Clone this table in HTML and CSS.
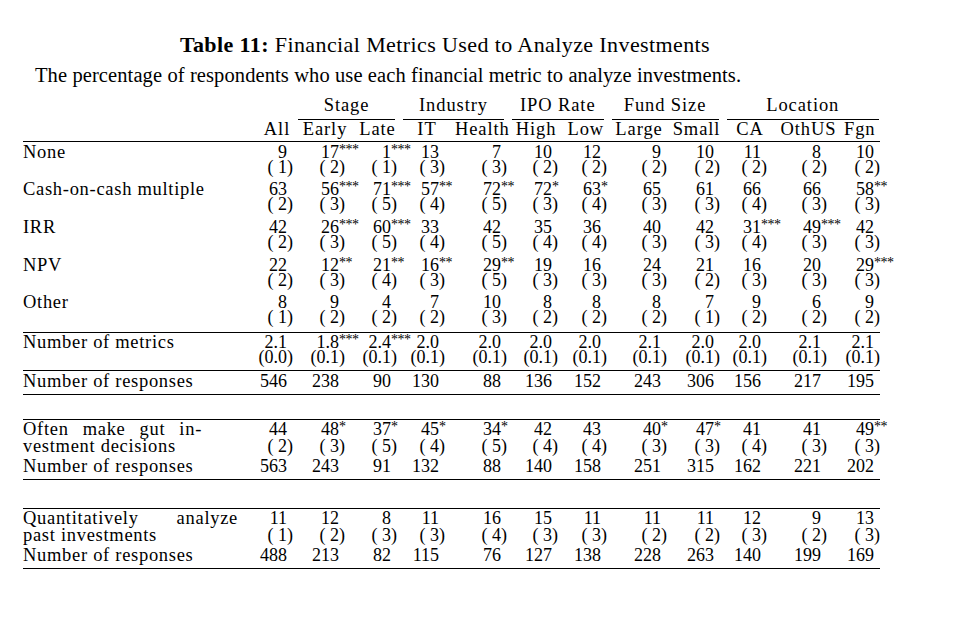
FILE: index.html
```html
<!DOCTYPE html>
<html lang="en">
<head>
<meta charset="utf-8">
<title>Table 11</title>
<link rel="stylesheet" href="styles.css">
</head>
<body>
<div class="page">
  <h1 class="title"><b>Table 11:</b> Financial Metrics Used to Analyze Investments</h1>
  <p class="caption">The percentage of respondents who use each financial metric to analyze investments.</p>
  <div class="tbl">
    <div class="hrow groups">
      <div class="g g-stage"><span>Stage</span></div>
      <div class="g g-ind"><span>Industry</span></div>
      <div class="g g-ipo"><span>IPO Rate</span></div>
      <div class="g g-fund"><span>Fund Size</span></div>
      <div class="g g-loc"><span>Location</span></div>
    </div>
    <div class="hrow cols">
      <div></div><div>All</div><div>Early</div><div>Late</div><div>IT</div><div>Health</div><div>High</div><div>Low</div><div>Large</div><div>Small</div><div>CA</div><div>OthUS</div><div>Fgn</div>
    </div>

    <div class="sec sec-main">
      <div class="row">
        <div class="lab">None</div>
        <div class="c"><div class="v">9</div><div class="se">( 1)</div></div>
        <div class="c"><div class="v">17<span class="st">***</span></div><div class="se">( 2)</div></div>
        <div class="c"><div class="v">1<span class="st">***</span></div><div class="se">( 1)</div></div>
        <div class="c"><div class="v">13</div><div class="se">( 3)</div></div>
        <div class="c"><div class="v">7</div><div class="se">( 3)</div></div>
        <div class="c"><div class="v">10</div><div class="se">( 2)</div></div>
        <div class="c"><div class="v">12</div><div class="se">( 2)</div></div>
        <div class="c"><div class="v">9</div><div class="se">( 2)</div></div>
        <div class="c"><div class="v">10</div><div class="se">( 2)</div></div>
        <div class="c"><div class="v">11</div><div class="se">( 2)</div></div>
        <div class="c"><div class="v">8</div><div class="se">( 2)</div></div>
        <div class="c"><div class="v">10</div><div class="se">( 2)</div></div>
      </div>
      <div class="row">
        <div class="lab">Cash-on-cash multiple</div>
        <div class="c"><div class="v">63</div><div class="se">( 2)</div></div>
        <div class="c"><div class="v">56<span class="st">***</span></div><div class="se">( 3)</div></div>
        <div class="c"><div class="v">71<span class="st">***</span></div><div class="se">( 5)</div></div>
        <div class="c"><div class="v">57<span class="st">**</span></div><div class="se">( 4)</div></div>
        <div class="c"><div class="v">72<span class="st">**</span></div><div class="se">( 5)</div></div>
        <div class="c"><div class="v">72<span class="st">*</span></div><div class="se">( 3)</div></div>
        <div class="c"><div class="v">63<span class="st">*</span></div><div class="se">( 4)</div></div>
        <div class="c"><div class="v">65</div><div class="se">( 3)</div></div>
        <div class="c"><div class="v">61</div><div class="se">( 3)</div></div>
        <div class="c"><div class="v">66</div><div class="se">( 4)</div></div>
        <div class="c"><div class="v">66</div><div class="se">( 3)</div></div>
        <div class="c"><div class="v">58<span class="st">**</span></div><div class="se">( 3)</div></div>
      </div>
      <div class="row">
        <div class="lab">IRR</div>
        <div class="c"><div class="v">42</div><div class="se">( 2)</div></div>
        <div class="c"><div class="v">26<span class="st">***</span></div><div class="se">( 3)</div></div>
        <div class="c"><div class="v">60<span class="st">***</span></div><div class="se">( 5)</div></div>
        <div class="c"><div class="v">33</div><div class="se">( 4)</div></div>
        <div class="c"><div class="v">42</div><div class="se">( 5)</div></div>
        <div class="c"><div class="v">35</div><div class="se">( 4)</div></div>
        <div class="c"><div class="v">36</div><div class="se">( 4)</div></div>
        <div class="c"><div class="v">40</div><div class="se">( 3)</div></div>
        <div class="c"><div class="v">42</div><div class="se">( 3)</div></div>
        <div class="c"><div class="v">31<span class="st">***</span></div><div class="se">( 4)</div></div>
        <div class="c"><div class="v">49<span class="st">***</span></div><div class="se">( 3)</div></div>
        <div class="c"><div class="v">42</div><div class="se">( 3)</div></div>
      </div>
      <div class="row">
        <div class="lab">NPV</div>
        <div class="c"><div class="v">22</div><div class="se">( 2)</div></div>
        <div class="c"><div class="v">12<span class="st">**</span></div><div class="se">( 3)</div></div>
        <div class="c"><div class="v">21<span class="st">**</span></div><div class="se">( 4)</div></div>
        <div class="c"><div class="v">16<span class="st">**</span></div><div class="se">( 3)</div></div>
        <div class="c"><div class="v">29<span class="st">**</span></div><div class="se">( 5)</div></div>
        <div class="c"><div class="v">19</div><div class="se">( 3)</div></div>
        <div class="c"><div class="v">16</div><div class="se">( 3)</div></div>
        <div class="c"><div class="v">24</div><div class="se">( 3)</div></div>
        <div class="c"><div class="v">21</div><div class="se">( 2)</div></div>
        <div class="c"><div class="v">16</div><div class="se">( 3)</div></div>
        <div class="c"><div class="v">20</div><div class="se">( 3)</div></div>
        <div class="c"><div class="v">29<span class="st">***</span></div><div class="se">( 3)</div></div>
      </div>
      <div class="row">
        <div class="lab">Other</div>
        <div class="c"><div class="v">8</div><div class="se">( 1)</div></div>
        <div class="c"><div class="v">9</div><div class="se">( 2)</div></div>
        <div class="c"><div class="v">4</div><div class="se">( 2)</div></div>
        <div class="c"><div class="v">7</div><div class="se">( 2)</div></div>
        <div class="c"><div class="v">10</div><div class="se">( 3)</div></div>
        <div class="c"><div class="v">8</div><div class="se">( 2)</div></div>
        <div class="c"><div class="v">8</div><div class="se">( 2)</div></div>
        <div class="c"><div class="v">8</div><div class="se">( 2)</div></div>
        <div class="c"><div class="v">7</div><div class="se">( 1)</div></div>
        <div class="c"><div class="v">9</div><div class="se">( 2)</div></div>
        <div class="c"><div class="v">6</div><div class="se">( 2)</div></div>
        <div class="c"><div class="v">9</div><div class="se">( 2)</div></div>
      </div>
    </div>

    <div class="sec sec-metrics">
      <div class="row">
        <div class="lab">Number of metrics</div>
        <div class="c"><div class="v">2.1</div><div class="se">(0.0)</div></div>
        <div class="c"><div class="v">1.8<span class="st">***</span></div><div class="se">(0.1)</div></div>
        <div class="c"><div class="v">2.4<span class="st">***</span></div><div class="se">(0.1)</div></div>
        <div class="c"><div class="v">2.0</div><div class="se">(0.1)</div></div>
        <div class="c"><div class="v">2.0</div><div class="se">(0.1)</div></div>
        <div class="c"><div class="v">2.0</div><div class="se">(0.1)</div></div>
        <div class="c"><div class="v">2.0</div><div class="se">(0.1)</div></div>
        <div class="c"><div class="v">2.1</div><div class="se">(0.1)</div></div>
        <div class="c"><div class="v">2.0</div><div class="se">(0.1)</div></div>
        <div class="c"><div class="v">2.0</div><div class="se">(0.1)</div></div>
        <div class="c"><div class="v">2.1</div><div class="se">(0.1)</div></div>
        <div class="c"><div class="v">2.1</div><div class="se">(0.1)</div></div>
      </div>
    </div>

    <div class="sec sec-resp">
      <div class="row">
        <div class="lab">Number of responses</div>
        <div class="c"><div class="v">546</div></div>
        <div class="c"><div class="v">238</div></div>
        <div class="c"><div class="v">90</div></div>
        <div class="c"><div class="v">130</div></div>
        <div class="c"><div class="v">88</div></div>
        <div class="c"><div class="v">136</div></div>
        <div class="c"><div class="v">152</div></div>
        <div class="c"><div class="v">243</div></div>
        <div class="c"><div class="v">306</div></div>
        <div class="c"><div class="v">156</div></div>
        <div class="c"><div class="v">217</div></div>
        <div class="c"><div class="v">195</div></div>
      </div>
    </div>

    <div class="sec sec-extra">
      <div class="row tall">
        <div class="lab lab-gut">
          <div class="jl">Often make gut in-</div>
          <div>vestment decisions</div>
        </div>
        <div class="c"><div class="v">44</div><div class="se">( 2)</div></div>
        <div class="c"><div class="v">48<span class="st">*</span></div><div class="se">( 3)</div></div>
        <div class="c"><div class="v">37<span class="st">*</span></div><div class="se">( 5)</div></div>
        <div class="c"><div class="v">45<span class="st">*</span></div><div class="se">( 4)</div></div>
        <div class="c"><div class="v">34<span class="st">*</span></div><div class="se">( 5)</div></div>
        <div class="c"><div class="v">42</div><div class="se">( 4)</div></div>
        <div class="c"><div class="v">43</div><div class="se">( 4)</div></div>
        <div class="c"><div class="v">40<span class="st">*</span></div><div class="se">( 3)</div></div>
        <div class="c"><div class="v">47<span class="st">*</span></div><div class="se">( 3)</div></div>
        <div class="c"><div class="v">41</div><div class="se">( 4)</div></div>
        <div class="c"><div class="v">41</div><div class="se">( 3)</div></div>
        <div class="c"><div class="v">49<span class="st">**</span></div><div class="se">( 3)</div></div>
      </div>
      <div class="row tall resp">
        <div class="lab">Number of responses</div>
        <div class="c"><div class="v">563</div></div>
        <div class="c"><div class="v">243</div></div>
        <div class="c"><div class="v">91</div></div>
        <div class="c"><div class="v">132</div></div>
        <div class="c"><div class="v">88</div></div>
        <div class="c"><div class="v">140</div></div>
        <div class="c"><div class="v">158</div></div>
        <div class="c"><div class="v">251</div></div>
        <div class="c"><div class="v">315</div></div>
        <div class="c"><div class="v">162</div></div>
        <div class="c"><div class="v">221</div></div>
        <div class="c"><div class="v">202</div></div>
      </div>
    </div>

    <div class="sec sec-extra sec-last">
      <div class="row tall">
        <div class="lab lab-quant">
          <div class="jl">Quantitatively analyze</div>
          <div>past investments</div>
        </div>
        <div class="c"><div class="v">11</div><div class="se">( 1)</div></div>
        <div class="c"><div class="v">12</div><div class="se">( 2)</div></div>
        <div class="c"><div class="v">8</div><div class="se">( 3)</div></div>
        <div class="c"><div class="v">11</div><div class="se">( 3)</div></div>
        <div class="c"><div class="v">16</div><div class="se">( 4)</div></div>
        <div class="c"><div class="v">15</div><div class="se">( 3)</div></div>
        <div class="c"><div class="v">11</div><div class="se">( 3)</div></div>
        <div class="c"><div class="v">11</div><div class="se">( 2)</div></div>
        <div class="c"><div class="v">11</div><div class="se">( 2)</div></div>
        <div class="c"><div class="v">12</div><div class="se">( 3)</div></div>
        <div class="c"><div class="v">9</div><div class="se">( 2)</div></div>
        <div class="c"><div class="v">13</div><div class="se">( 3)</div></div>
      </div>
      <div class="row tall resp">
        <div class="lab">Number of responses</div>
        <div class="c"><div class="v">488</div></div>
        <div class="c"><div class="v">213</div></div>
        <div class="c"><div class="v">82</div></div>
        <div class="c"><div class="v">115</div></div>
        <div class="c"><div class="v">76</div></div>
        <div class="c"><div class="v">127</div></div>
        <div class="c"><div class="v">138</div></div>
        <div class="c"><div class="v">228</div></div>
        <div class="c"><div class="v">263</div></div>
        <div class="c"><div class="v">140</div></div>
        <div class="c"><div class="v">199</div></div>
        <div class="c"><div class="v">169</div></div>
      </div>
    </div>
  </div>
</div>
</body>
</html>
```

FILE: styles.css
```css
* {
  box-sizing: border-box;
  margin: 0;
  padding: 0;
}

:root {
  --hcols: 237px 34px 62px 43px 56px 53px 56px 43.5px 63px 52px 55px 62px 40.5px;
  --bcols: 235px 35px 52px 52px 48px 62px 51px 49px 60px 53px 47px 60px 53px;
}

body {
  background: #ffffff;
  color: #000000;
  font-family: "Liberation Serif", "Times New Roman", serif;
}

.page {
  width: 880px;
  padding: 33.3px 0 0 23px;
}

.title {
  font-size: 22px;
  font-weight: normal;
  line-height: 24px;
  letter-spacing: 0.4px;
  text-align: center;
  padding-right: 13px;
}

.title b {
  font-weight: bold;
}

.caption {
  font-size: 20.5px;
  line-height: 24px;
  letter-spacing: 0.1px;
  margin-top: 5.5px;
  padding-left: 12px;
}

.tbl {
  width: 857px;
  margin-top: 10.7px;
  font-size: 18px;
}

/* header rows */
.hrow {
  display: grid;
  grid-template-columns: var(--hcols);
  font-size: 18.5px;
  letter-spacing: 0.9px;
  line-height: 16px;
  text-align: center;
}

.groups .g span {
  display: block;
  margin: 0 4px;
  padding-bottom: 5.5px;
  border-bottom: 1px solid #000;
}

.g-stage { grid-column: 3 / span 2; }
.g-ind { grid-column: 5 / span 2; }
.g-ipo { grid-column: 7 / span 2; }
.g-fund { grid-column: 9 / span 2; }
.g-loc { grid-column: 11 / span 3; }
.groups .g-loc span { margin-right: 1px; }

.cols {
  padding-top: 0.8px;
  padding-bottom: 4.2px;
  border-bottom: 1px solid #000;
}

/* body rows */
.sec {
  display: flex;
  flex-direction: column;
  border-bottom: 1px solid #000;
}

.row {
  display: grid;
  grid-template-columns: var(--bcols);
  line-height: 15px;
}

.row.tall {
  line-height: 16.5px;
}

.lab {
  font-size: 18.5px;
  letter-spacing: 0.7px;
}

.c {
  text-align: right;
  white-space: nowrap;
}

.v {
  padding-right: 6px;
}

.st {
  display: inline-block;
  width: 0;
  text-align: left;
  font-size: 14px;
  letter-spacing: -0.5px;
  line-height: 0;
  vertical-align: 4px;
}

.sec-main {
  padding: 2.7px 0 6.5px;
  gap: 7.7px;
}

.sec-metrics {
  padding: 2.4px 0 4.6px;
}

.sec-resp {
  padding: 3.4px 0 4.6px;
}

.sec-extra {
  margin-top: 24px;
  border-top: 1px solid #000;
  padding: 1.4px 0 5.1px;
  gap: 4.4px;
}

.sec-last {
  margin-top: 28px;
}

.row.resp {
  line-height: 15px;
}

.lab-gut {
  width: 179px;
}

.lab-quant {
  width: 215px;
}

.jl {
  text-align: justify;
  text-align-last: justify;
}
```
